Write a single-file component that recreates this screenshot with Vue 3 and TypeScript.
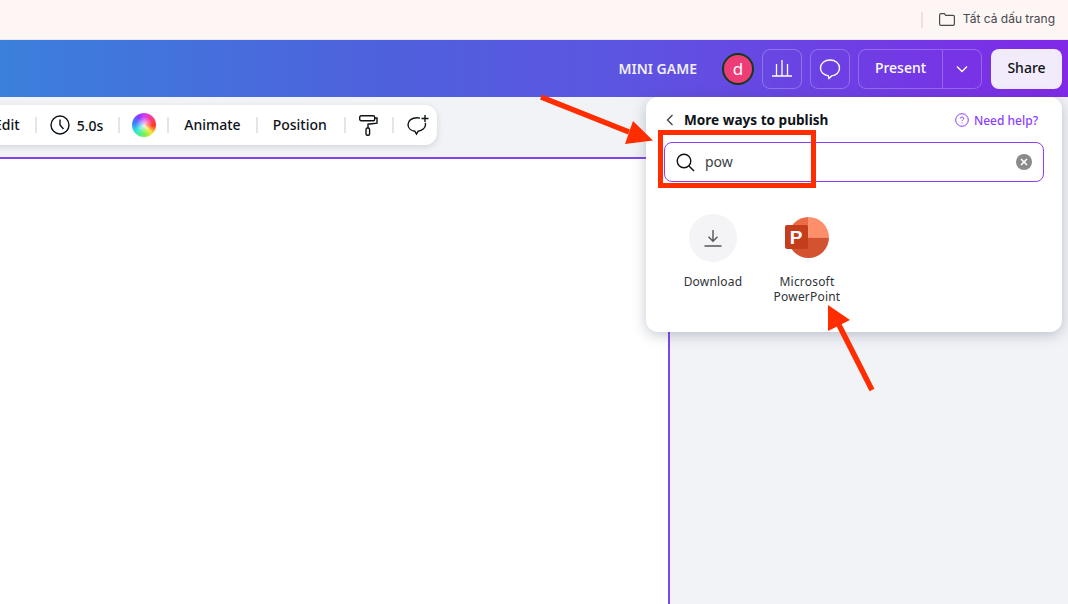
<script setup lang="ts">
const lines: string[] = ['Microsoft', 'PowerPoint']
</script>

<template>
  <div class="page">
    <div class="bookmarks">
      <span class="bm-sep"></span>
      <svg class="folder" width="16" height="13" viewBox="0 0 16 13" fill="none" stroke="#4a4a4a" stroke-width="1.2">
        <path d="M.6 2.200c0-.9.6-1.500 1.400-1.500h3.300l1.500 1.700h7.200c.9 0 1.400.6 1.400 1.400v7.200c0 .9-.6 1.400-1.400 1.400H2c-.8 0-1.400-.5-1.400-1.400z" />
      </svg>
      <span class="bm-text">Tất cả dấu trang</span>
    </div>

    <header class="header">
      <span class="title">MINI GAME</span>
      <span class="avatar">d</span>
      <button class="ghost icon-btn">
        <svg width="20" height="20" viewBox="0 0 20 20" fill="none" stroke="#fff" stroke-width="1.300">
          <path d="M0 17h20M4.500 16.500V5M10 16.500V1M15.500 16.500V5" />
        </svg>
      </button>
      <button class="ghost icon-btn">
        <svg width="22" height="22" viewBox="0 0 22 22" fill="none" stroke="#fff" stroke-width="1.400">
          <path d="M11 2c5.300 0 9.500 3.400 9.500 8 0 4.300-3.600 7.500-7.900 7.900L10 20.500l-.7-2.700C4.900 17.400 1.500 14.300 1.500 10c0-4.600 4.200-8 9.500-8z" />
        </svg>
      </button>
      <div class="ghost present">
        <span class="present-label">Present</span>
        <span class="present-caret">
          <svg width="12" height="8" viewBox="0 0 12 8" fill="none" stroke="#fff" stroke-width="1.400"><path d="M1 1.500l5 5 5-5" /></svg>
        </span>
      </div>
      <button class="share">Share</button>
    </header>

    <main class="workspace">
      <div class="toolbar">
        <span class="tool">Edit</span>
        <i class="sep"></i>
        <span class="tool clock">
          <svg width="20" height="20" viewBox="0 0 20 20" fill="none" stroke="#0e1318" stroke-width="1.400">
            <circle cx="10" cy="10" r="9" /><path d="M10 4.500V10l3.500 4" />
          </svg>
          5.0s
        </span>
        <i class="sep"></i>
        <span class="wheel"></span>
        <i class="sep"></i>
        <span class="tool">Animate</span>
        <i class="sep"></i>
        <span class="tool position">Position</span>
        <i class="sep"></i>
        <svg class="roller" width="19" height="21" viewBox="0 0 19 21" fill="none" stroke="#0e1318" stroke-width="1.400">
          <rect x=".7" y=".7" width="15" height="5" rx="1.500" />
          <path d="M15.700 3H18v5.200l-9 1V13" />
          <rect x="7" y="13" width="3.600" height="7.300" rx="1.500" />
        </svg>
        <i class="sep"></i>
        <svg class="comment" width="22" height="21" viewBox="0 0 22 21" fill="none" stroke="#0e1318" stroke-width="1.400">
          <path d="M13 3.200c-1-.3-2-.5-3-.5C5 2.700 1 5.500 1 9.500c0 3.700 3 6.300 6.800 6.700l1.700 3 1.700-3c3.800-.4 7.300-3 7.300-6.700 0-.6-.1-1.100-.2-1.600" />
          <path d="M18 0v7M14.500 3.500h7" />
        </svg>
      </div>

      <div class="canvas"></div>

      <section class="panel">
        <div class="panel-head">
          <svg class="back" width="8" height="12" viewBox="0 0 8 12" fill="none" stroke="#3a3f45" stroke-width="1.300"><path d="M6.500 1L1.500 6l5 5" /></svg>
          <h2>More ways to publish</h2>
          <span class="help">
            <svg width="14" height="14" viewBox="0 0 14 14" fill="none" stroke="#8b3dff" stroke-width="1">
              <circle cx="7" cy="7" r="6.300" />
              <path d="M5.300 5.400C5.400 4.500 6.100 4 7 4s1.700.6 1.700 1.500c0 1.300-1.700 1.300-1.700 2.600M7 9.500v1" />
            </svg>
            Need help?
          </span>
        </div>
        <div class="search">
          <svg width="19" height="19" viewBox="0 0 19 19" fill="none" stroke="#0e1318" stroke-width="1.400">
            <circle cx="8" cy="8" r="6.800" /><path d="M13 13l5 5" />
          </svg>
          <span class="query">pow</span>
          <span class="clear">
            <svg width="8" height="8" viewBox="0 0 8 8" stroke="#fff" stroke-width="1.600"><path d="M1 1l6 6M7 1L1 7" /></svg>
          </span>
        </div>
        <div class="tiles">
          <div class="tile">
            <span class="dl-circle">
              <svg width="18" height="18" viewBox="0 0 18 18" fill="none" stroke="#54565a" stroke-width="1.400">
                <path d="M9 1v11M4.500 7.800L9 12.300l4.500-4.500M.5 17h17" />
              </svg>
            </span>
            <span class="tile-label">Download</span>
          </div>
          <div class="tile">
            <svg class="ppt" width="48" height="48" viewBox="0 0 48 48">
              <path d="M25.500 3a20.500 20.500 0 0 1 20.500 20.500H25.500z" fill="#ff8f6b" />
              <path d="M46 23.500A20.500 20.500 0 0 1 25.500 44 20.500 20.500 0 0 1 5 23.500z" fill="#d35230" />
              <path d="M25.500 3v20.500H5A20.500 20.500 0 0 1 25.500 3z" fill="#ed6c47" />
              <rect x="2" y="11" width="23" height="24" rx="2" fill="#c43e1c" />
              <text x="13" y="29.500" text-anchor="middle" class="ppt-p">P</text>
            </svg>
            <span class="tile-label">
              <span v-for="l in lines" :key="l" class="tile-line">{{ l }}</span>
            </span>
          </div>
        </div>
      </section>

      <div class="red-box"></div>
    </main>

    <svg class="arrows" width="1068" height="604" viewBox="0 0 1068 604">
      <path d="M541 97l88 35" stroke="#ff2d00" stroke-width="5.500" fill="none" />
      <path d="M653 140.500L633 121l-8 23z" fill="#ff2d00" />
      <path d="M872 390l-33-65" stroke="#ff2d00" stroke-width="5.500" fill="none" />
      <path d="M828 305l22 15-22 11z" fill="#ff2d00" />
    </svg>
  </div>
</template>

<style>
html, body { margin: 0; background: #f1f2f7; }
</style>

<style scoped>
.page {
  position: relative;
  width: 1068px;
  height: 604px;
  overflow: hidden;
  display: flex;
  flex-direction: column;
  font-family: "Noto Sans", "Open Sans", sans-serif;
  color: #0e1318;
  background: #f2f3f7;
}
.bookmarks {
  height: 39px;
  flex: none;
  background: #fdf6f5;
  border-bottom: 1px solid #ece6f5;
  display: flex;
  align-items: center;
  justify-content: flex-end;
  padding-right: 13px;
}
.bm-sep { width: 2px; height: 16px; background: #efdfdf; margin-right: 16px; }
.folder { margin-right: 8px; }
.bm-text { font-family: Inter, sans-serif; font-size: 12px; color: #45474b; padding-bottom: 2px; }
.header {
  height: 57px;
  flex: none;
  box-sizing: border-box;
  display: flex;
  align-items: center;
  justify-content: flex-end;
  padding-right: 6px;
  background: linear-gradient(90deg, #3b80db 0%, #4f60dd 37%, #5c55e1 58%, #8029e7 100%);
  color: #fff;
}
.title { font-size: 14px; font-weight: 600; color: #f0eefc; margin-right: 25px; }
.avatar {
  width: 28px;
  height: 28px;
  border: 2px solid #123a1c;
  border-radius: 50%;
  background: #ec3d77;
  display: flex;
  align-items: center;
  justify-content: center;
  font-size: 17px;
  line-height: 1;
  margin-right: 8px;
}
.ghost {
  box-sizing: border-box;
  height: 40px;
  border: 1px solid rgba(255, 255, 255, 0.25);
  border-radius: 8px;
  background: transparent;
  color: #fff;
  padding: 0;
}
.icon-btn {
  width: 40px;
  display: flex;
  align-items: center;
  justify-content: center;
  margin-right: 8px;
}
.present { width: 124px; display: flex; align-items: stretch; margin-right: 9px; }
.present-label {
  width: 84px;
  display: flex;
  align-items: center;
  justify-content: center;
  font-size: 14px;
  font-weight: 500;
  padding-bottom: 2px;
  box-sizing: border-box;
  border-right: 1px solid rgba(255, 255, 255, 0.25);
}
.present-caret { flex: 1; display: flex; align-items: center; justify-content: center; }
.share {
  width: 71px;
  height: 40px;
  border: 0;
  border-radius: 8px;
  background: #f1ebfb;
  color: #0e1318;
  font: 500 14px "Noto Sans", sans-serif;
  padding: 0 0 2px;
}
.workspace { position: relative; flex: 1; min-height: 0; display: flex; flex-direction: column; }
.toolbar {
  box-sizing: border-box;
  width: 457px;
  height: 40px;
  margin: 8px 0 12px -20px;
  padding-left: 12px;
  flex: none;
  background: #fff;
  border-radius: 12px;
  box-shadow: 0 2px 6px rgba(57, 76, 96, 0.18);
  display: flex;
  align-items: center;
  gap: 13px;
  font-size: 14px;
  font-weight: 500;
}
.tool { white-space: nowrap; margin: 0 2px 2px; }
.clock { display: flex; align-items: center; gap: 7px; margin: 0 2px 0 0; }
.position { margin-right: 4px; }
.roller { margin-right: 1px; }
.sep { width: 2px; height: 16px; background: #e4e5ea; flex: none; }
.wheel {
  width: 24px;
  height: 24px;
  border-radius: 50%;
  flex: none;
  margin: 0 -2px 0 -1px;
  background:
    radial-gradient(circle, rgba(255, 255, 255, 0.8) 0%, rgba(255, 255, 255, 0) 50%),
    conic-gradient(#d43bff, #ff3b6b 60deg, #ff3b1e 95deg, #f5e83b 135deg, #7cf24a 175deg, #2fe6d8 235deg, #3b7bff 285deg, #8a3bff 330deg, #d43bff);
}
.canvas {
  width: 668px;
  flex: 1;
  background: #fff;
  border-top: 2px solid #7d45f0;
  border-right: 2px solid #7d45f0;
}
.panel {
  position: absolute;
  left: 646px;
  top: 0;
  box-sizing: border-box;
  width: 416px;
  height: 235px;
  padding: 14px 18px 0;
  background: #fff;
  border-radius: 12px;
  box-shadow: 0 3px 14px rgba(57, 76, 96, 0.3);
}
.panel-head { display: flex; align-items: center; height: 18px; }
.back { margin: 0 10px 0 2px; flex: none; }
.panel-head h2 { margin: 0 0 2px; font-size: 13.600px; font-weight: 700; flex: 1; }
.help {
  display: flex;
  align-items: center;
  gap: 5px;
  font-size: 12px;
  font-weight: 500;
  color: #8b3dff;
  margin-right: 6px;
}
.search {
  box-sizing: border-box;
  height: 40px;
  margin-top: 13px;
  border: 1px solid #8b3dff;
  border-radius: 8px;
  display: flex;
  align-items: center;
  padding: 0 11px;
}
.query { flex: 1; margin: 0 0 2px 10px; font-size: 14px; color: #3a3f45; }
.clear {
  width: 16px;
  height: 16px;
  border-radius: 50%;
  background: #8a8a8c;
  display: flex;
  align-items: center;
  justify-content: center;
}
.tiles { display: flex; margin-top: 32px; padding-left: 16px; gap: 28px; }
.tile {
  width: 66px;
  display: flex;
  flex-direction: column;
  align-items: center;
}
.dl-circle {
  width: 48px;
  height: 48px;
  border-radius: 50%;
  background: #f4f4f6;
  display: flex;
  align-items: center;
  justify-content: center;
}
.ppt { display: block; }
.ppt-p { font: 700 19px "Liberation Sans", sans-serif; fill: #fff; }
.tile-label {
  margin-top: 12px;
  font-size: 12px;
  letter-spacing: 0.2px;
  line-height: 15px;
  text-align: center;
  color: #2f3338;
  white-space: nowrap;
}
.tile-line { display: block; }
.red-box {
  position: absolute;
  left: 658px;
  top: 33px;
  box-sizing: border-box;
  width: 158px;
  height: 58px;
  border: 5px solid #ff2d00;
}
.arrows { position: absolute; left: 0; top: 0; pointer-events: none; }
</style>
